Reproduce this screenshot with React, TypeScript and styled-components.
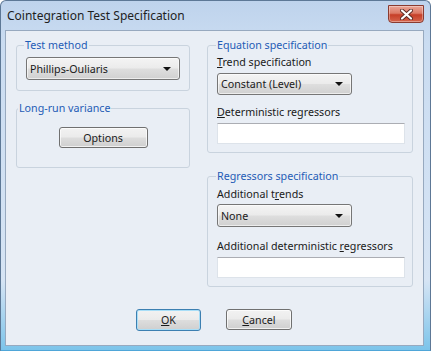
import React from 'react';
import styled, { createGlobalStyle } from 'styled-components';

const GlobalStyle = createGlobalStyle`
  html, body {
    margin: 0;
    padding: 0;
    background: #ffffff;
  }
  body {
    font-family: 'Noto Sans', 'Liberation Sans', sans-serif;
    font-size: 10.7px;
    color: #1a1a1a;
  }
`;

const Window = styled.div`
  width: 431px;
  height: 351px;
  box-sizing: border-box;
  display: flex;
  flex-direction: column;
  padding: 0 6px 4px 4px;
  border: 1px solid #5d7896;
  border-bottom-color: #4fa6d8;
  border-radius: 6px 6px 0 0;
  background: linear-gradient(to bottom, #bed3ec 0%, #cadcf1 12%, #d6e4f4 80%, #7cc4ea 100%);
`;

const TitleBar = styled.div`
  height: 29px;
  display: flex;
  justify-content: space-between;
  align-items: flex-start;
  padding: 4px 0 0 2px;
  box-sizing: border-box;
`;

const Title = styled.div`
  font-size: 12px;
  line-height: 16px;
  padding-top: 3px;
  color: #1e1e1e;
`;

const CloseButton = styled.div`
  width: 36px;
  height: 18px;
  box-sizing: border-box;
  border: 1px solid #8a3b30;
  border-radius: 0 0 4px 4px;
  background: linear-gradient(to bottom, #eaa597 0%, #dc7a66 45%, #c63f28 55%, #d5644c 100%);
  display: flex;
  align-items: center;
  justify-content: center;
  box-shadow: inset 0 0 0 1px rgba(255, 255, 255, 0.35);
`;

const Client = styled.div`
  flex: 1;
  display: flex;
  flex-direction: column;
  background: #e9eef5;
  border: 1px solid #97a9bf;
  padding: 7px 10px 0 10px;
`;

const Columns = styled.div`
  display: grid;
  grid-template-columns: 174px 206px;
  column-gap: 17px;
  align-items: start;
`;

const Column = styled.div<{ $gap: number }>`
  display: flex;
  flex-direction: column;
  gap: ${p => p.$gap}px;
`;

const Group = styled.fieldset<{ $h: number; $top: number }>`
  margin: 0;
  min-width: 0;
  height: ${p => p.$h}px;
  box-sizing: border-box;
  padding: ${p => p.$top}px 9px 0 9px;
  border: 1px solid #c9d3de;
  border-radius: 3px;
  display: flex;
  flex-direction: column;
  align-items: flex-start;
`;

const Legend = styled.legend<{ $shift: number }>`
  padding: 0 1px;
  margin-left: ${p => p.$shift}px;
  font-size: 10.7px;
  line-height: 14px;
  color: #1f5cb6;
`;

const FieldLabel = styled.div<{ $top?: number }>`
  margin-top: ${p => p.$top ?? 0}px;
  line-height: 14px;
  height: 14px;
  white-space: nowrap;
`;

const Select = styled.div<{ $w: number; $h: number; $top?: number }>`
  width: ${p => p.$w}px;
  height: ${p => p.$h}px;
  margin-top: ${p => p.$top ?? 0}px;
  box-sizing: border-box;
  border: 1px solid #767676;
  border-radius: 3px;
  background: linear-gradient(to bottom, #f4f4f4 0%, #ebebeb 48%, #dedede 52%, #d0d0d0 100%);
  display: flex;
  align-items: center;
  justify-content: space-between;
  padding: 0 8px 0 3px;
  box-shadow: inset 0 0 0 1px rgba(255, 255, 255, 0.6);
`;

const Arrow = styled.span`
  width: 0;
  height: 0;
  border-left: 4px solid transparent;
  border-right: 4px solid transparent;
  border-top: 4px solid #111;
`;

const TextBox = styled.div<{ $top?: number }>`
  width: 188px;
  height: 21px;
  margin-top: ${p => p.$top ?? 0}px;
  box-sizing: border-box;
  background: #ffffff;
  border: 1px solid #dde3ea;
  border-top-color: #abadb3;
`;

const CenterRow = styled.div`
  align-self: stretch;
  display: flex;
  justify-content: center;
`;

const Button = styled.div<{ $w: number; $default?: boolean }>`
  width: ${p => p.$w}px;
  height: ${p => (p.$default ? 22 : 21)}px;
  box-sizing: border-box;
  border: 1px solid ${p => (p.$default ? '#3c7fb1' : '#707070')};
  border-radius: 3px;
  background: linear-gradient(to bottom, #f2f2f2 0%, #ebebeb 48%, #dddddd 52%, #cfcfcf 100%);
  box-shadow: inset 0 0 0 1px ${p => (p.$default ? '#a9def7' : 'rgba(255,255,255,0.7)')};
  display: flex;
  align-items: center;
  justify-content: center;
  line-height: 14px;
`;

const ButtonRow = styled.div`
  margin-top: 22px;
  display: flex;
  justify-content: center;
  gap: 25px;
  padding-right: 1px;
`;

const U = styled.span`
  text-decoration: underline;
`;

const App: React.FC = () => {
  return (
    <>
      <GlobalStyle />
      <Window>
        <TitleBar>
          <Title>Cointegration Test Specification</Title>
          <CloseButton>
            <svg width="13" height="11" viewBox="0 0 13 11">
              <path d="M2 1.5 L11 9.5 M11 1.5 L2 9.5" stroke="#5a2a24" strokeWidth="4" strokeLinecap="round" />
              <path d="M2 1.5 L11 9.5 M11 1.5 L2 9.5" stroke="#ffffff" strokeWidth="2.2" strokeLinecap="round" />
            </svg>
          </CloseButton>
        </TitleBar>
        <Client>
          <Columns>
            <Column $gap={10}>
              <Group $h={53} $top={5}>
                <Legend $shift={-2}>Test method</Legend>
                <Select $w={154} $h={23}>
                  <span>Phillips-Ouliaris</span>
                  <Arrow />
                </Select>
              </Group>
              <Group $h={67} $top={12}>
                <Legend $shift={-8}>Long-run variance</Legend>
                <CenterRow>
                  <Button $w={89}>Options</Button>
                </CenterRow>
              </Group>
            </Column>
            <Column $gap={16}>
              <Group $h={115} $top={3}>
                <Legend $shift={-1}>Equation specification</Legend>
                <FieldLabel>
                  <U>T</U>rend specification
                </FieldLabel>
                <Select $w={135} $h={22} $top={4}>
                  <span>Constant (Level)</span>
                  <Arrow />
                </Select>
                <FieldLabel $top={10}>
                  <U>D</U>eterministic regressors
                </FieldLabel>
                <TextBox $top={4} />
              </Group>
              <Group $h={118} $top={4}>
                <Legend $shift={-1}>Regressors specification</Legend>
                <FieldLabel>
                  Additional t<U>r</U>ends
                </FieldLabel>
                <Select $w={135} $h={23} $top={3}>
                  <span>None</span>
                  <Arrow />
                </Select>
                <FieldLabel $top={12}>
                  Additional deterministic <U>r</U>egressors
                </FieldLabel>
                <TextBox $top={4} />
              </Group>
            </Column>
          </Columns>
          <ButtonRow>
            <Button $w={65} $default>
              <span>
                <U>O</U>K
              </span>
            </Button>
            <Button $w={66}>
              <span>
                <U>C</U>ancel
              </span>
            </Button>
          </ButtonRow>
        </Client>
      </Window>
    </>
  );
};

export default App;
